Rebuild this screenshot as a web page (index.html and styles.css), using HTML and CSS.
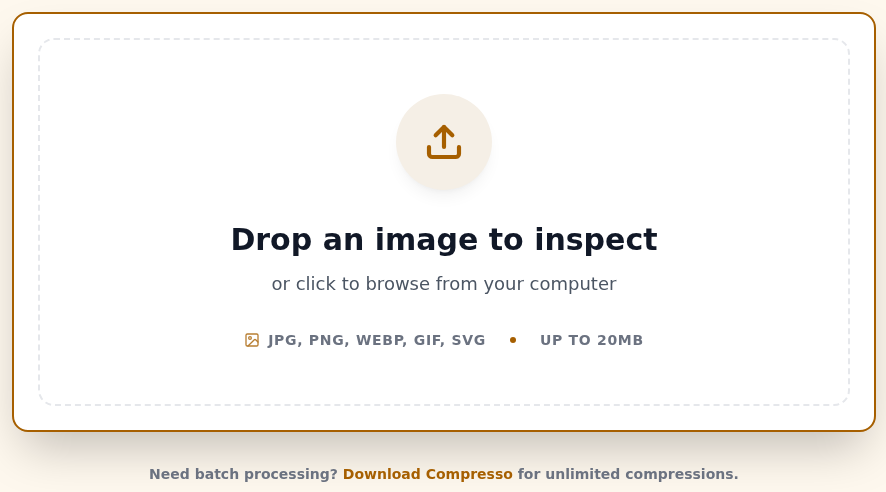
FILE: index.html
```html
<!DOCTYPE html>
<html lang="en">
<head>
    <meta charset="utf-8">
    <link rel="stylesheet" href="styles.css">
</head>
<body>
<div class="page">
    <div class="card">
        <div class="drop">
            <div class="circle">
                <svg class="upload" viewBox="0 0 24 24" width="40" height="40" fill="none" stroke="currentColor" stroke-width="2.500" stroke-linecap="round" stroke-linejoin="round">
                    <path d="M21 15v4a2 2 0 0 1-2 2H5a2 2 0 0 1-2-2v-4"/>
                    <path d="M17 8 12 3 7 8"/>
                    <path d="M12 3v12"/>
                </svg>
            </div>
            <h1>Drop an image to inspect</h1>
            <p class="sub">or click to browse from your computer</p>
            <div class="meta">
                <span class="formats">
                    <svg viewBox="0 0 24 24" width="16" height="16" fill="none" stroke="currentColor" stroke-width="2" stroke-linecap="round" stroke-linejoin="round">
                        <rect x="3" y="3" width="18" height="18" rx="2"/>
                        <circle cx="9" cy="9" r="2"/>
                        <path d="m21 15-3.100-3.100a2 2 0 0 0-2.800 0L6 21"/>
                    </svg>
                    JPG, PNG, WEBP, GIF, SVG
                </span>
                <i class="dot"></i>
                <span>UP TO 20MB</span>
            </div>
        </div>
    </div>
    <p class="note">Need batch processing? <a href="#">Download Compresso</a> for unlimited compressions.</p>
</div>
</body>
</html>
```

FILE: styles.css
```css
* {
    margin: 0;
    padding: 0;
    box-sizing: border-box;
}

body {
    background-color: #fef8ee;
    font-family: "DejaVu Sans", sans-serif;
    overflow: hidden;
}

.page {
    padding: 12px 10px 0 12px;
    height: 492px;
    will-change: transform;
}

.card {
    height: 420px;
    padding: 24px;
    background-color: #fff;
    border: 2px solid #a65f00;
    border-radius: 16px;
    box-shadow: 0 25px 50px -12px rgba(0, 0, 0, .25);
}

.drop {
    height: 100%;
    display: flex;
    flex-direction: column;
    align-items: center;
    padding-top: 54px;
    border: 2px dashed #e5e7eb;
    border-radius: 16px;
}

.circle {
    width: 96px;
    height: 96px;
    display: flex;
    align-items: center;
    justify-content: center;
    border-radius: 50%;
    background-color: #f5efe6;
    color: #a65f00;
    box-shadow: 0 10px 15px -3px rgba(0, 0, 0, .05), 0 4px 6px -4px rgba(0, 0, 0, .05);
}

h1 {
    margin-top: 30px;
    font-size: 30px;
    line-height: 40px;
    font-weight: 700;
    color: #111827;
}

.sub {
    margin-top: 10px;
    font-size: 18px;
    line-height: 28px;
    color: #4b5563;
}

.meta {
    display: flex;
    align-items: center;
    margin-top: 32px;
    font-size: 14px;
    line-height: 20px;
    font-weight: 700;
    letter-spacing: .7px;
    color: #6b7280;
}

.formats {
    display: flex;
    align-items: center;
    gap: 8px;
}

.formats svg {
    color: #a65f00;
    opacity: .8;
}

.dot {
    width: 6px;
    height: 6px;
    margin: 0 24px;
    border-radius: 50%;
    background-color: #a65f00;
}

.note {
    margin-top: 32px;
    font-size: 14px;
    line-height: 20px;
    font-weight: 700;
    text-align: center;
    color: #6b7280;
}

.note a {
    color: #a65f00;
    text-decoration: none;
}
```
